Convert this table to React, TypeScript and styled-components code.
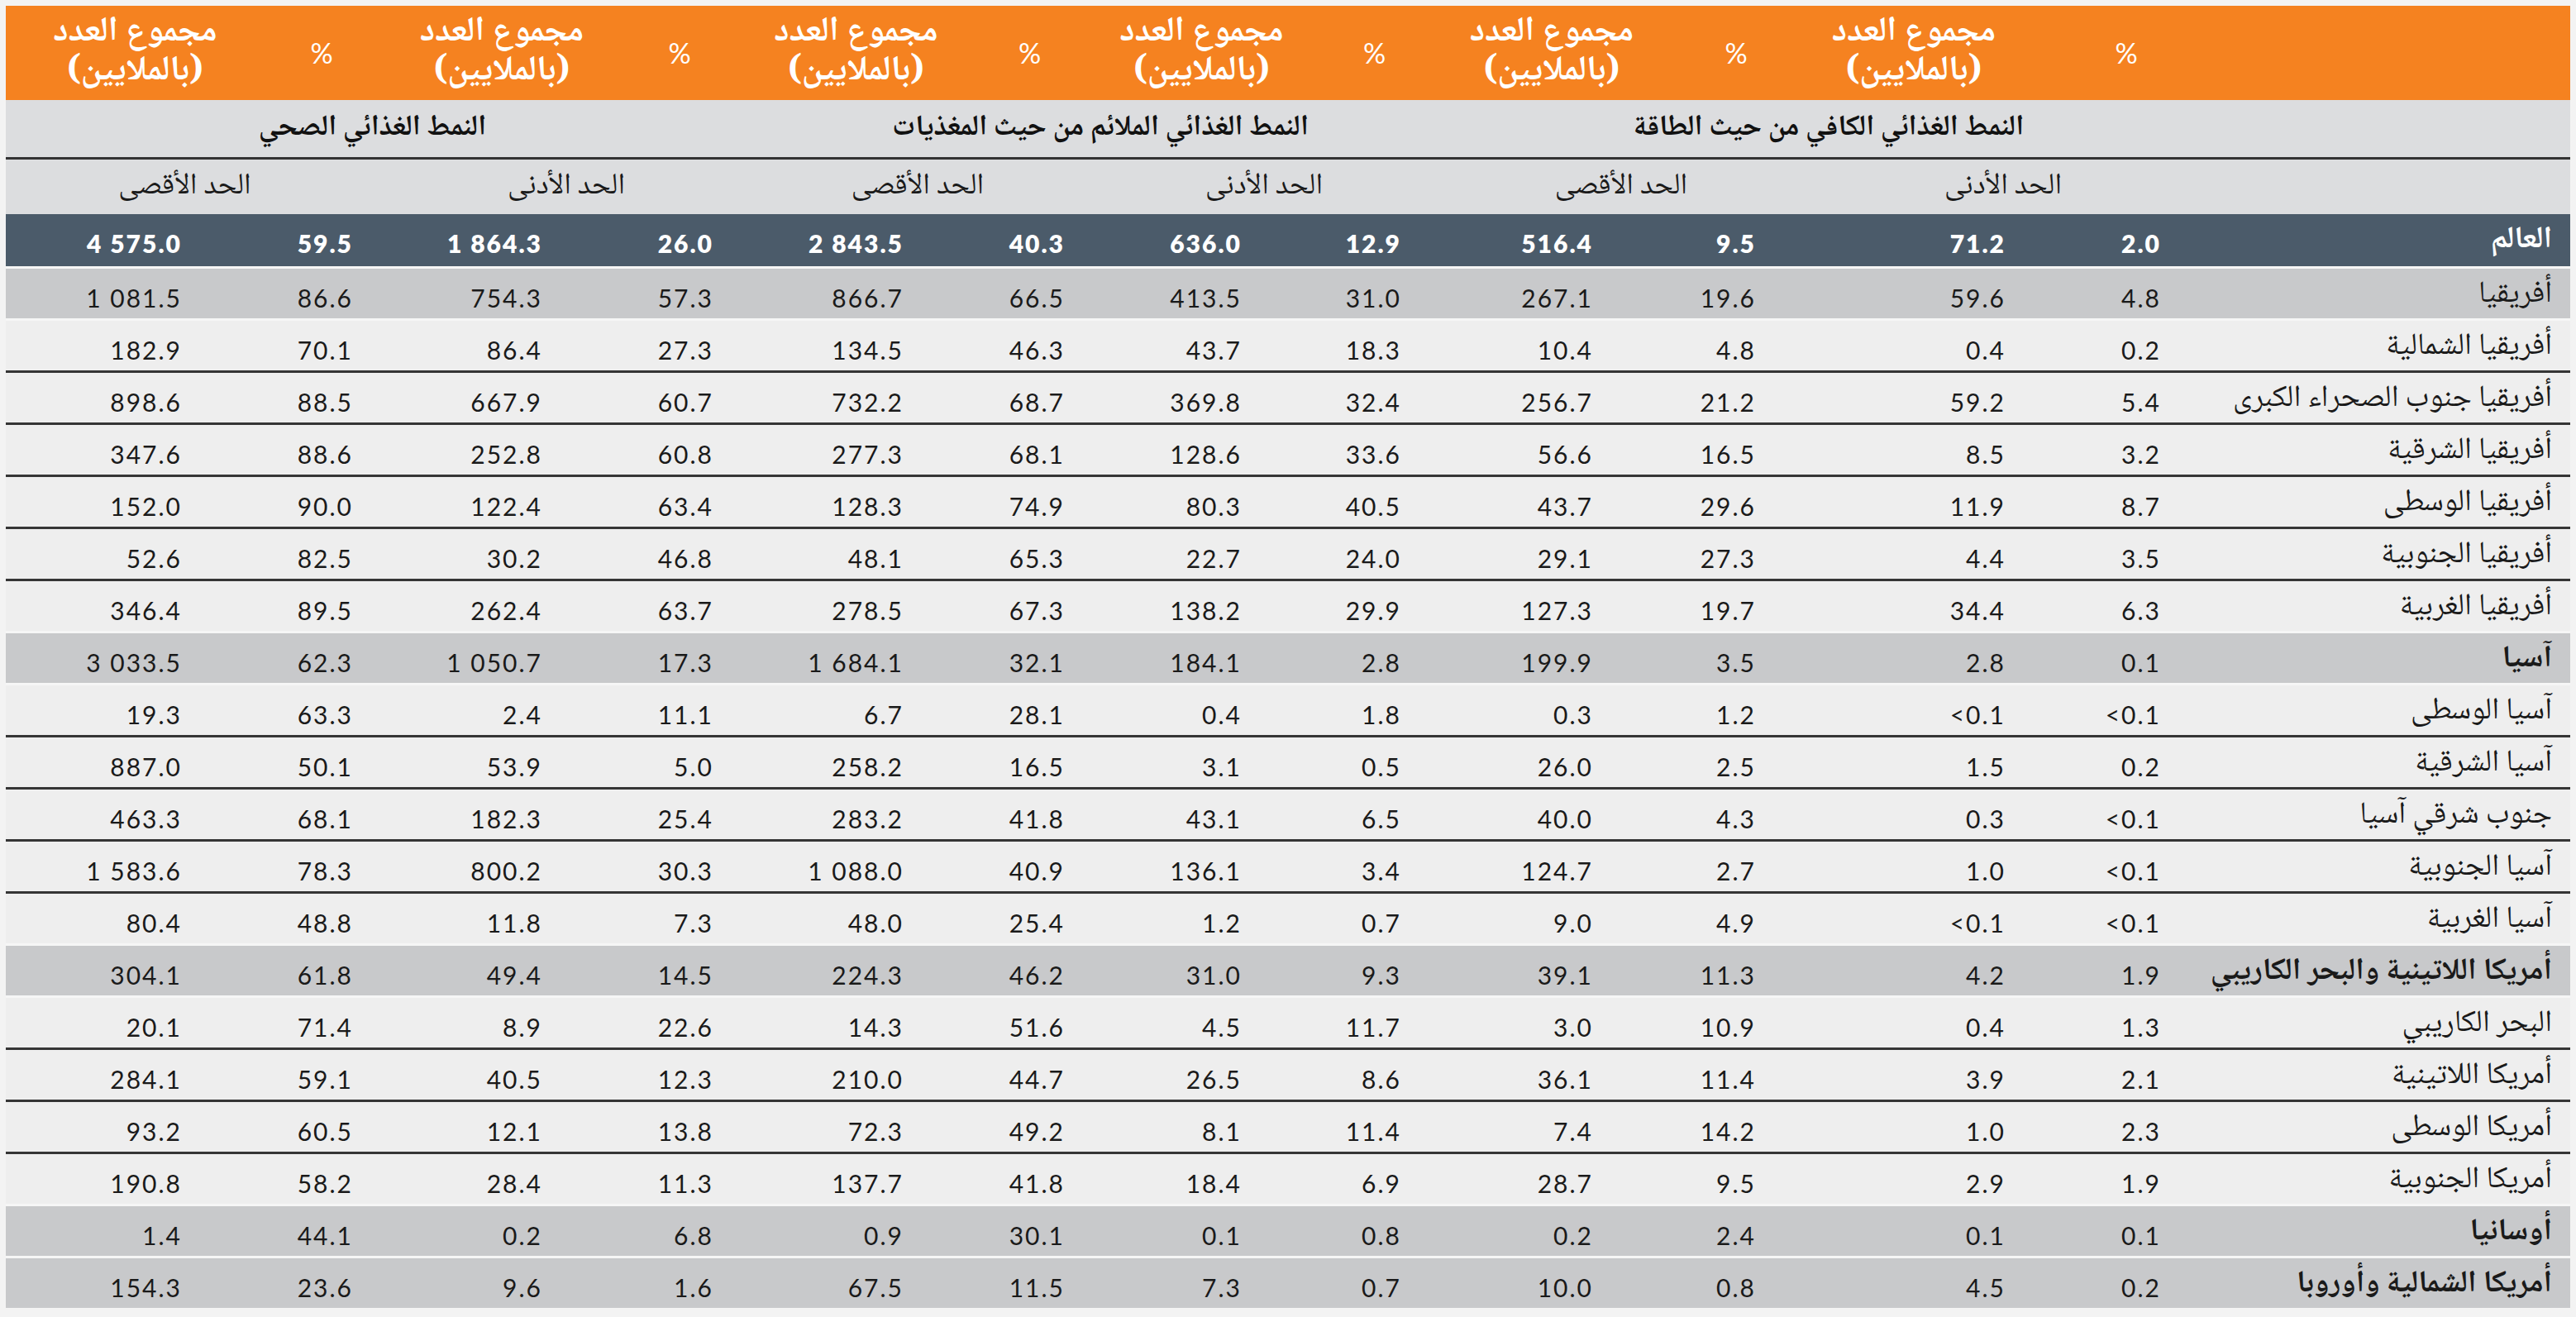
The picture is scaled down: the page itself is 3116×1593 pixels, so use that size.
import React from 'react';
import styled, { createGlobalStyle, css } from 'styled-components';

const ARABIC = `"Noto Naskh Arabic", "Noto Sans Arabic", "DejaVu Sans", sans-serif`;
const NUM = `Lato, "Liberation Sans", sans-serif`;

const GlobalStyle = createGlobalStyle`
  html, body { margin: 0; padding: 0; background: #f3f3f3; }
  body { width: 3116px; height: 1593px; overflow: hidden; }
  * { box-sizing: border-box; }
`;

type Col = { w: number; pad: number; kind: 'pct' | 'cnt'; hpr?: number; hpl?: number };

const COLS: Col[] = [
  { w: 240, pad: 78, kind: 'pct' },
  { w: 238, pad: 26, kind: 'cnt', hpr: 36 },
  { w: 228, pad: 90, kind: 'pct' },
  { w: 218, pad: 59, kind: 'cnt' },
  { w: 211, pad: 73, kind: 'pct' },
  { w: 207, pad: 55, kind: 'cnt' },
  { w: 209, pad: 62, kind: 'pct' },
  { w: 211, pad: 48, kind: 'cnt' },
  { w: 216, pad: 67, kind: 'pct' },
  { w: 214, pad: 58, kind: 'cnt' },
  { w: 222, pad: 73, kind: 'pct' },
  { w: 271, pad: 58, kind: 'cnt', hpl: 42 },
];
const NAME_W = 417;
const TEMPLATE = `${NAME_W}px ${COLS.map((c) => `${c.w}px`).join(' ')}`;

type Tone = 'world' | 'gray' | 'white';
type Row = { name: string; tone: Tone; bold?: boolean; v: string[] };

const ROWS: Row[] = [
  { name: 'العالم', tone: 'world', bold: true, v: ['2.0', '71.2', '9.5', '516.4', '12.9', '636.0', '40.3', '2 843.5', '26.0', '1 864.3', '59.5', '4 575.0'] },
  { name: 'أفريقيا', tone: 'gray', v: ['4.8', '59.6', '19.6', '267.1', '31.0', '413.5', '66.5', '866.7', '57.3', '754.3', '86.6', '1 081.5'] },
  { name: 'أفريقيا الشمالية', tone: 'white', v: ['0.2', '0.4', '4.8', '10.4', '18.3', '43.7', '46.3', '134.5', '27.3', '86.4', '70.1', '182.9'] },
  { name: 'أفريقيا جنوب الصحراء الكبرى', tone: 'white', v: ['5.4', '59.2', '21.2', '256.7', '32.4', '369.8', '68.7', '732.2', '60.7', '667.9', '88.5', '898.6'] },
  { name: 'أفريقيا الشرقية', tone: 'white', v: ['3.2', '8.5', '16.5', '56.6', '33.6', '128.6', '68.1', '277.3', '60.8', '252.8', '88.6', '347.6'] },
  { name: 'أفريقيا الوسطى', tone: 'white', v: ['8.7', '11.9', '29.6', '43.7', '40.5', '80.3', '74.9', '128.3', '63.4', '122.4', '90.0', '152.0'] },
  { name: 'أفريقيا الجنوبية', tone: 'white', v: ['3.5', '4.4', '27.3', '29.1', '24.0', '22.7', '65.3', '48.1', '46.8', '30.2', '82.5', '52.6'] },
  { name: 'أفريقيا الغربية', tone: 'white', v: ['6.3', '34.4', '19.7', '127.3', '29.9', '138.2', '67.3', '278.5', '63.7', '262.4', '89.5', '346.4'] },
  { name: 'آسيا', tone: 'gray', bold: true, v: ['0.1', '2.8', '3.5', '199.9', '2.8', '184.1', '32.1', '1 684.1', '17.3', '1 050.7', '62.3', '3 033.5'] },
  { name: 'آسيا الوسطى', tone: 'white', v: ['<0.1', '<0.1', '1.2', '0.3', '1.8', '0.4', '28.1', '6.7', '11.1', '2.4', '63.3', '19.3'] },
  { name: 'آسيا الشرقية', tone: 'white', v: ['0.2', '1.5', '2.5', '26.0', '0.5', '3.1', '16.5', '258.2', '5.0', '53.9', '50.1', '887.0'] },
  { name: 'جنوب شرقي آسيا', tone: 'white', v: ['<0.1', '0.3', '4.3', '40.0', '6.5', '43.1', '41.8', '283.2', '25.4', '182.3', '68.1', '463.3'] },
  { name: 'آسيا الجنوبية', tone: 'white', v: ['<0.1', '1.0', '2.7', '124.7', '3.4', '136.1', '40.9', '1 088.0', '30.3', '800.2', '78.3', '1 583.6'] },
  { name: 'آسيا الغربية', tone: 'white', v: ['<0.1', '<0.1', '4.9', '9.0', '0.7', '1.2', '25.4', '48.0', '7.3', '11.8', '48.8', '80.4'] },
  { name: 'أمريكا اللاتينية والبحر الكاريبي', tone: 'gray', bold: true, v: ['1.9', '4.2', '11.3', '39.1', '9.3', '31.0', '46.2', '224.3', '14.5', '49.4', '61.8', '304.1'] },
  { name: 'البحر الكاريبي', tone: 'white', v: ['1.3', '0.4', '10.9', '3.0', '11.7', '4.5', '51.6', '14.3', '22.6', '8.9', '71.4', '20.1'] },
  { name: 'أمريكا اللاتينية', tone: 'white', v: ['2.1', '3.9', '11.4', '36.1', '8.6', '26.5', '44.7', '210.0', '12.3', '40.5', '59.1', '284.1'] },
  { name: 'أمريكا الوسطى', tone: 'white', v: ['2.3', '1.0', '14.2', '7.4', '11.4', '8.1', '49.2', '72.3', '13.8', '12.1', '60.5', '93.2'] },
  { name: 'أمريكا الجنوبية', tone: 'white', v: ['1.9', '2.9', '9.5', '28.7', '6.9', '18.4', '41.8', '137.7', '11.3', '28.4', '58.2', '190.8'] },
  { name: 'أوسانيا', tone: 'gray', bold: true, v: ['0.1', '0.1', '2.4', '0.2', '0.8', '0.1', '30.1', '0.9', '6.8', '0.2', '44.1', '1.4'] },
  { name: 'أمريكا الشمالية وأوروبا', tone: 'gray', bold: true, v: ['0.2', '4.5', '0.8', '10.0', '0.7', '7.3', '11.5', '67.5', '1.6', '9.6', '23.6', '154.3'] },
];

const GROUPS = [
  'النمط الغذائي الكافي من حيث الطاقة',
  'النمط الغذائي الملائم من حيث المغذيات',
  'النمط الغذائي الصحي',
];
const SUBS = ['الحد الأدنى', 'الحد الأقصى', 'الحد الأدنى', 'الحد الأقصى', 'الحد الأدنى', 'الحد الأقصى'];
const COUNT_LABEL = 'مجموع العدد\n(بالملايين)';

const Page = styled.div`
  padding: 7px;
`;

const Table = styled.div`
  direction: rtl;
  width: 3102px;
  display: flex;
  flex-direction: column;
`;

const GridRow = styled.div`
  display: grid;
  grid-template-columns: ${TEMPLATE};
`;

const HeadRow = styled(GridRow)`
  background: #f58220;
  height: 114px;
  align-items: center;
  color: #ffffff;
`;

const HeadCell = styled.div<{ $pr?: number; $pl?: number }>`
  display: flex;
  flex-direction: column;
  align-items: center;
  justify-content: center;
  padding-right: ${(p) => p.$pr ?? 0}px;
  padding-left: ${(p) => p.$pl ?? 0}px;
`;

const CountLabel = styled.span`
  display: block;
  text-align: center;
  white-space: pre;
  font-family: ${ARABIC};
  font-weight: 700;
  font-size: 42px;
  line-height: 47px;
`;

const PctLabel = styled.span`
  font-family: ${NUM};
  font-weight: 400;
  font-size: 34px;
  line-height: 44px;
`;

const GroupRow = styled(GridRow)`
  background: #dcdddf;
  height: 72px;
  border-bottom: 3px solid #333333;
  align-items: center;
`;

const GroupCell = styled.div`
  grid-column: span 4;
  text-align: center;
  padding-right: 36px;
  font-family: ${ARABIC};
  font-weight: 700;
  font-size: 35px;
  color: #111111;
  white-space: nowrap;
`;

const SubRow = styled(GridRow)`
  background: #dcdddf;
  height: 66px;
  align-items: center;
`;

const SubCell = styled.div`
  grid-column: span 2;
  text-align: center;
  padding-right: 60px;
  font-family: ${ARABIC};
  font-weight: 400;
  font-size: 36px;
  color: #1a1a1a;
  white-space: nowrap;
`;

const Blank = styled.div``;

const toneBg: Record<Tone, string> = {
  world: '#4b5b6a',
  gray: '#c8c9cb',
  white: '#eeeeee',
};

const DataRow = styled(GridRow)<{ $tone: Tone; $sep: 'none' | 'light' | 'dark' }>`
  background: ${(p) => toneBg[p.$tone]};
  color: ${(p) => (p.$tone === 'world' ? '#ffffff' : '#1a1a1a')};
  height: 63px;
  align-items: center;
  ${(p) =>
    p.$sep === 'dark' &&
    css`
      border-top: 3px solid #353535;
    `}
  ${(p) =>
    p.$sep === 'light' &&
    css`
      border-top: 3px solid #f6f6f6;
    `}
`;

const NameCell = styled.div<{ $bold?: boolean }>`
  padding-right: 22px;
  text-align: right;
  font-family: ${ARABIC};
  font-weight: ${(p) => (p.$bold ? 700 : 400)};
  font-size: 37px;
  white-space: nowrap;
`;

const NumCell = styled.div<{ $pad: number; $bold?: boolean }>`
  direction: ltr;
  text-align: right;
  padding-right: ${(p) => p.$pad}px;
  font-family: ${NUM};
  font-weight: ${(p) => (p.$bold ? 800 : 400)};
  font-size: 30px;
  letter-spacing: 2px;
  white-space: nowrap;
  padding-top: 6px;
`;

export default function App() {
  return (
    <>
      <GlobalStyle />
      <Page>
        <Table>
          <HeadRow>
            <Blank />
            {COLS.map((c, i) => (
              <HeadCell key={i} $pr={c.hpr} $pl={c.hpl}>
                {c.kind === 'pct' ? <PctLabel>%</PctLabel> : <CountLabel>{COUNT_LABEL}</CountLabel>}
              </HeadCell>
            ))}
          </HeadRow>
          <GroupRow>
            <Blank />
            {GROUPS.map((g) => (
              <GroupCell key={g}>{g}</GroupCell>
            ))}
          </GroupRow>
          <SubRow>
            <Blank />
            {SUBS.map((s, i) => (
              <SubCell key={i}>{s}</SubCell>
            ))}
          </SubRow>
          {ROWS.map((r, i) => {
            const prev = i > 0 ? ROWS[i - 1] : null;
            const sep = !prev ? 'none' : prev.tone === 'white' && r.tone === 'white' ? 'dark' : 'light';
            return (
              <DataRow key={r.name} $tone={r.tone} $sep={sep}>
                <NameCell $bold={r.bold}>{r.name}</NameCell>
                {r.v.map((v, j) => (
                  <NumCell key={j} $pad={COLS[j].pad} $bold={r.tone === 'world'}>
                    {v}
                  </NumCell>
                ))}
              </DataRow>
            );
          })}
        </Table>
      </Page>
    </>
  );
}
